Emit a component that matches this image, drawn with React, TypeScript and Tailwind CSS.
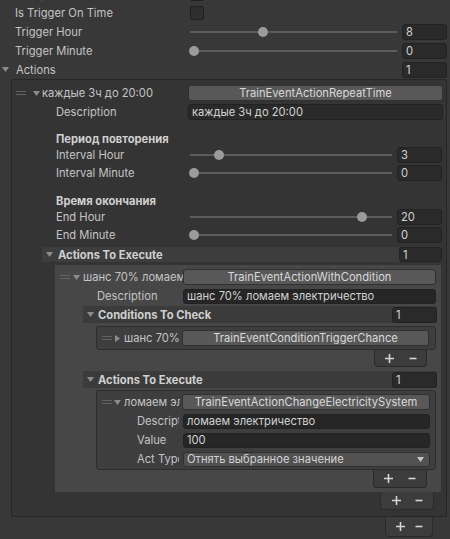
import React from "react";

type Cls = { className?: string };

// Foldout triangle, open (down) or closed (right)
const Arrow = ({ open = true, className = "" }: { open?: boolean; className?: string }) =>
  open ? (
    <svg width="7" height="5" viewBox="0 0 7 5" className={"shrink-0 " + className}>
      <polygon points="0,0 7,0 3.5,5" fill="#8c8c8c" />
    </svg>
  ) : (
    <svg width="5" height="7" viewBox="0 0 5 7" className={"shrink-0 " + className}>
      <polygon points="0,0 5,3.5 0,7" fill="#8c8c8c" />
    </svg>
  );

// Reorderable list drag handle
const Handle = ({ className = "" }: Cls) => (
  <div className={"flex w-[10px] shrink-0 flex-col gap-[2px] " + className}>
    <div className="h-px bg-[#636363]" />
    <div className="h-px bg-[#636363]" />
  </div>
);

const Field = ({ className = "", children }: Cls & { children?: React.ReactNode }) => (
  <div
    className={
      "flex shrink-0 items-center overflow-hidden whitespace-nowrap rounded-[3px] border border-[#222222] pl-[3px] text-[#d2d2d2] " +
      className
    }
  >
    {children}
  </div>
);

const TypeButton = ({ className = "", children }: Cls & { children?: React.ReactNode }) => (
  <div
    className={
      "flex h-4 shrink-0 items-center justify-center overflow-hidden whitespace-nowrap rounded-[3px] border border-[#303030] bg-[#585858] text-[#d8d8d8] " +
      className
    }
  >
    {children}
  </div>
);

const Slider = ({
  value,
  max = 23,
  trackClass,
  fieldClass,
}: {
  value: number;
  max?: number;
  trackClass: string;
  fieldClass: string;
}) => {
  const f = value / max;
  return (
    <>
      <div className={"relative h-full shrink-0 " + trackClass}>
        <div className="absolute left-[1px] right-0 top-1/2 h-[2px] -translate-y-1/2 bg-[#5c5c5c]" />
        <div
          className="absolute top-1/2 h-[10px] w-[10px] -translate-y-1/2 rounded-full bg-[#9b9b9b]"
          style={{ left: `calc(${f * 100}% - ${f * 10}px)` }}
        />
      </div>
      <Field className={"bg-[#2a2a2a] " + fieldClass}>{value}</Field>
    </>
  );
};

const Plus = () => (
  <svg width="9" height="9" viewBox="0 0 9 9" className="shrink-0">
    <path d="M4.5 0V9M0 4.5H9" stroke="#d4d4d4" strokeWidth="1.6" />
  </svg>
);

const Minus = () => (
  <svg width="8" height="9" viewBox="0 0 8 9" className="shrink-0">
    <path d="M0.5 4.5H7.5" stroke="#d4d4d4" strokeWidth="1.6" />
  </svg>
);

const Footer = ({ className = "" }: Cls) => (
  <div
    className={
      "flex items-center justify-center rounded-b-[4px] border border-t-0 border-[#2a2a2a] bg-[#3c3c3c] " + className
    }
  >
    <Plus />
    <Minus />
  </div>
);

const Checkbox = () => (
  <div className="h-[14px] w-[14px] shrink-0 rounded-[2px] border border-[#202020] bg-[#2e2e2e]" />
);

// Narrow label column of the innermost element; long names are clipped
const NarrowLabel = ({ children }: { children: React.ReactNode }) => (
  <div className="w-[86px] shrink-0 pl-[40px]">
    <div className="w-[42px] overflow-hidden whitespace-nowrap">{children}</div>
  </div>
);

export default function App() {
  return (
    <div className="h-[539px] w-[450px] overflow-hidden bg-[#383838] font-['Inter','Noto_Sans',sans-serif] text-[11.2px] leading-[14px] text-[#c4c4c4]">
      {/* top-level fields */}
      <div className="-mt-[16px] flex h-[19px] items-center">
        <div className="w-[190px] pl-[15px]">Is Repeating</div>
        <Checkbox />
      </div>
      <div className="flex h-[19px] items-center">
        <div className="w-[190px] pl-[15px]">Is Trigger On Time</div>
        <Checkbox />
      </div>
      <div className="flex h-[19px] items-center">
        <div className="w-[189px] pl-[15px]">Trigger Hour</div>
        <Slider value={8} trackClass="w-[208px]" fieldClass="ml-[5px] h-4 w-[45px]" />
      </div>
      <div className="flex h-[19px] items-center">
        <div className="w-[189px] pl-[15px]">Trigger Minute</div>
        <Slider value={0} trackClass="w-[208px]" fieldClass="ml-[5px] h-4 w-[45px]" />
      </div>
      <div className="flex h-[19px] items-center">
        <Arrow className="ml-[2px]" />
        <div className="ml-[7px] w-[386px]">Actions</div>
        <Field className="h-4 w-[45px] bg-[#2a2a2a]">1</Field>
      </div>

      {/* Actions list */}
      <div className="ml-[11px] w-[436px] rounded-[2px] border border-[#262626] bg-[#343434] pb-[6px] pt-[4px]">
        <div className="flex h-[18px] items-center">
          <Handle className="ml-[4px]" />
          <Arrow className="ml-[7px]" />
          <div className="ml-[2px] w-[146px] overflow-hidden whitespace-nowrap">каждые 3ч до 20:00</div>
          <TypeButton className="w-[255px]">TrainEventActionRepeatTime</TypeButton>
        </div>
        <div className="mt-[1px] flex h-[18px] items-center">
          <div className="w-[176px] pl-[44px]">Description</div>
          <Field className="h-4 w-[255px] bg-[#2a2a2a]">каждые 3ч до 20:00</Field>
        </div>

        <div className="mt-[10px] flex h-[15px] items-center pl-[44px] font-bold text-[#d0d0d0]">Период повторения</div>
        <div className="flex h-[18px] items-center">
          <div className="w-[177px] pl-[44px]">Interval Hour</div>
          <Slider value={3} trackClass="w-[203px]" fieldClass="ml-[5px] h-4 w-[45px]" />
        </div>
        <div className="flex h-[18px] items-center">
          <div className="w-[177px] pl-[44px]">Interval Minute</div>
          <Slider value={0} trackClass="w-[203px]" fieldClass="ml-[5px] h-4 w-[45px]" />
        </div>

        <div className="mt-[11px] flex h-[15px] items-center pl-[44px] font-bold text-[#d0d0d0]">Время окончания</div>
        <div className="flex h-[18px] items-center">
          <div className="w-[177px] pl-[44px]">End Hour</div>
          <Slider value={20} trackClass="w-[203px]" fieldClass="ml-[5px] h-4 w-[45px]" />
        </div>
        <div className="flex h-[18px] items-center">
          <div className="w-[177px] pl-[44px]">End Minute</div>
          <Slider value={0} trackClass="w-[203px]" fieldClass="ml-[5px] h-4 w-[45px]" />
        </div>

        {/* Actions To Execute */}
        <div className="ml-[30px] mt-[3px] flex h-[15px] w-[400px] items-center bg-[#3d3d3d]">
          <Arrow className="ml-[4px]" />
          <div className="ml-[5px] flex-1 font-bold text-[#d0d0d0]">Actions To Execute</div>
          <Field className="h-[15px] w-[43px] bg-[#2a2a2a]">1</Field>
        </div>
        <div className="ml-[43px] mt-[3px] w-[386px] bg-[#474747] pb-[4px] pt-[3px]">
          <div className="flex h-[18px] items-center">
            <Handle className="ml-[5px]" />
            <Arrow className="ml-[3px]" />
            <div className="ml-[3px] w-[100px] overflow-hidden whitespace-nowrap">шанс 70% ломаем электричество</div>
            <TypeButton className="w-[253px]">TrainEventActionWithCondition</TypeButton>
          </div>
          <div className="mt-[1px] flex h-[18px] items-center">
            <div className="w-[128px] pl-[42px]">Description</div>
            <Field className="h-[15px] w-[253px] bg-[#262626]">шанс 70% ломаем электричество</Field>
          </div>

          {/* Conditions To Check */}
          <div className="ml-[28px] mt-[1px] flex h-[17px] w-[354px] items-center bg-[#3b3b3b]">
            <Arrow className="ml-[4px]" />
            <div className="ml-[4px] flex-1 font-bold text-[#d0d0d0]">Conditions To Check</div>
            <Field className="h-4 w-[45px] bg-[#2a2a2a]">1</Field>
          </div>
          <div className="ml-[41px] mt-[3px] w-[340px] rounded-[3px] border border-[#2d2d2d] bg-[#3e3e3e] py-[2px]">
            <div className="flex h-[18px] items-center">
              <Handle className="ml-[5px]" />
              <Arrow open={false} className="ml-[3px]" />
              <div className="ml-[4px] w-[58px] overflow-hidden whitespace-nowrap">шанс 70%</div>
              <TypeButton className="w-[247px]">TrainEventConditionTriggerChance</TypeButton>
            </div>
          </div>
          <Footer className="ml-[319px] h-[17px] w-[53px] gap-[15px]" />

          {/* nested Actions To Execute */}
          <div className="ml-[28px] mt-[4px] flex h-[17px] w-[354px] items-center bg-[#3b3b3b]">
            <Arrow className="ml-[4px]" />
            <div className="ml-[4px] flex-1 font-bold text-[#d0d0d0]">Actions To Execute</div>
            <Field className="h-4 w-[45px] bg-[#2a2a2a]">1</Field>
          </div>
          <div className="ml-[41px] mt-[2px] w-[340px] rounded-[3px] border border-[#2d2d2d] bg-[#3e3e3e] pb-[1px] pt-[2px]">
            <div className="flex h-[18px] items-center">
              <Handle className="ml-[5px]" />
              <Arrow className="ml-[2px]" />
              <div className="ml-[3px] w-[56px] overflow-hidden whitespace-nowrap">ломаем электричество</div>
              <TypeButton className="ml-[2px] w-[248px]">TrainEventActionChangeElectricitySystem</TypeButton>
            </div>
            <div className="mt-[1px] flex h-[18px] items-center">
              <NarrowLabel>Description</NarrowLabel>
              <Field className="h-[15px] w-[247px] bg-[#262626]">ломаем электричество</Field>
            </div>
            <div className="mt-[1px] flex h-[18px] items-center">
              <NarrowLabel>Value</NarrowLabel>
              <Field className="h-[15px] w-[247px] bg-[#262626]">100</Field>
            </div>
            <div className="mt-[1px] flex h-[18px] items-center">
              <NarrowLabel>Act Type</NarrowLabel>
              <div className="flex h-[15px] w-[247px] shrink-0 items-center justify-between rounded-[3px] border border-[#2f2f2f] bg-[#515151] pl-[3px] pr-[5px] text-[#d2d2d2]">
                <span className="whitespace-nowrap">Отнять выбранное значение</span>
                <svg width="7" height="5" viewBox="0 0 7 5" className="shrink-0">
                  <polygon points="0,0 7,0 3.5,5" fill="#c4c4c4" />
                </svg>
              </div>
            </div>
          </div>
          <Footer className="ml-[318px] h-[18px] w-[54px] gap-[15px]" />
        </div>
        <Footer className="ml-[368px] h-[18px] w-[54px] gap-[14px]" />
      </div>
      <Footer className="ml-[385px] h-[20px] w-[48px] gap-[10px]" />
    </div>
  );
}
